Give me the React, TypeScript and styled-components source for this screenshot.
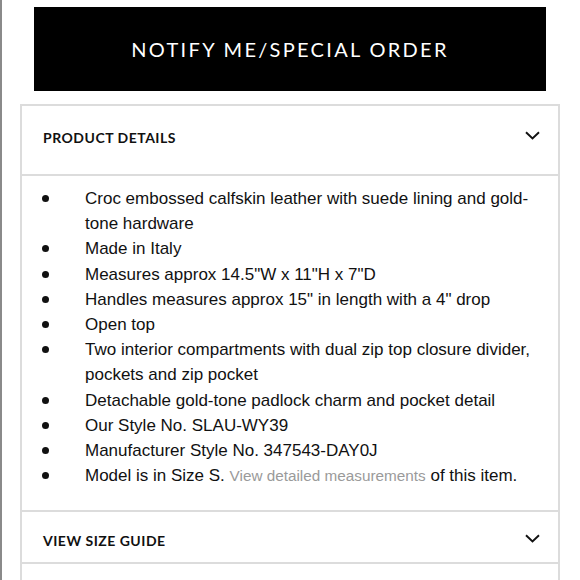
import React from 'react';
import styled, { createGlobalStyle } from 'styled-components';

const GlobalStyle = createGlobalStyle`
  html, body {
    margin: 0;
    padding: 0;
    background: #ffffff;
  }
  body {
    font-family: 'Liberation Sans', Arial, sans-serif;
    color: #111;
  }
`;

const Page = styled.div`
  box-sizing: border-box;
  width: 580px;
  min-height: 580px;
  border-left: 2px solid #8a8a8a;
  padding-top: 7px;
  display: flex;
  flex-direction: column;
  align-items: center;
  overflow: hidden;
`;

const NotifyButton = styled.button`
  width: 512px;
  height: 84px;
  margin-left: -2px;
  background: #000;
  color: #fff;
  border: none;
  font-family: 'Lato', 'Liberation Sans', sans-serif;
  font-size: 20px;
  font-weight: 400;
  letter-spacing: 2.3px;
  cursor: pointer;
`;

const Panel = styled.div`
  box-sizing: border-box;
  width: 540px;
  margin-top: 13px;
  margin-left: -2px;
  border: 2px solid #dcdcdc;
  border-bottom: none;
`;

const SectionHeader = styled.div<{ $top: number; $bottom: number }>`
  display: flex;
  align-items: center;
  justify-content: space-between;
  padding: ${({ $top }) => $top}px 18px ${({ $bottom }) => $bottom}px 21px;
  border-bottom: 2px solid #dcdcdc;
`;

const SectionTitle = styled.span`
  font-family: 'Lato', 'Liberation Sans', sans-serif;
  font-size: 14px;
  font-weight: 700;
  letter-spacing: 0.5px;
  color: #111;
`;

const Chevron = styled.svg`
  width: 15px;
  height: 9px;
  margin-top: -5px;
`;

const DetailsBody = styled.ul`
  list-style: none;
  margin: 0;
  padding: 10px 18px 22px 19px;
  border-bottom: 2px solid #dcdcdc;
`;

const Item = styled.li`
  display: grid;
  grid-template-columns: 44px 1fr;
  font-size: 17px;
  line-height: 25.2px;
  color: #111;
`;

const Dot = styled.span`
  width: 7px;
  height: 7px;
  border-radius: 50%;
  background: #111;
  margin: 9px 0 0 1px;
`;

const Muted = styled.span`
  font-size: 15.3px;
  color: #9a9a9a;
`;

const ChevronIcon: React.FC = () => (
  <Chevron viewBox="0 0 15 9" fill="none">
    <path d="M1 1.2 L7.5 7.5 L14 1.2" stroke="#111" strokeWidth="1.9" />
  </Chevron>
);

const details: React.ReactNode[] = [
  'Croc embossed calfskin leather with suede lining and gold-tone hardware',
  'Made in Italy',
  'Measures approx 14.5"W x 11"H x 7"D',
  'Handles measures approx 15" in length with a 4" drop',
  'Open top',
  'Two interior compartments with dual zip top closure divider, pockets and zip pocket',
  'Detachable gold-tone padlock charm and pocket detail',
  'Our Style No. SLAU-WY39',
  'Manufacturer Style No. 347543-DAY0J',
  <>
    Model is in Size S. <Muted>View detailed measurements</Muted> of this item.
  </>,
];

const App: React.FC = () => {
  return (
    <>
      <GlobalStyle />
      <Page>
        <NotifyButton>NOTIFY ME/SPECIAL ORDER</NotifyButton>
        <Panel>
          <SectionHeader $top={23} $bottom={28}>
            <SectionTitle>PRODUCT DETAILS</SectionTitle>
            <ChevronIcon />
          </SectionHeader>
          <DetailsBody>
            {details.map((d, i) => (
              <Item key={i}>
                <Dot />
                <span>{d}</span>
              </Item>
            ))}
          </DetailsBody>
          <SectionHeader $top={20} $bottom={13}>
            <SectionTitle>VIEW SIZE GUIDE</SectionTitle>
            <ChevronIcon />
          </SectionHeader>
          <SectionHeader $top={30} $bottom={30}>
            <SectionTitle>&nbsp;</SectionTitle>
          </SectionHeader>
        </Panel>
      </Page>
    </>
  );
};

export default App;
